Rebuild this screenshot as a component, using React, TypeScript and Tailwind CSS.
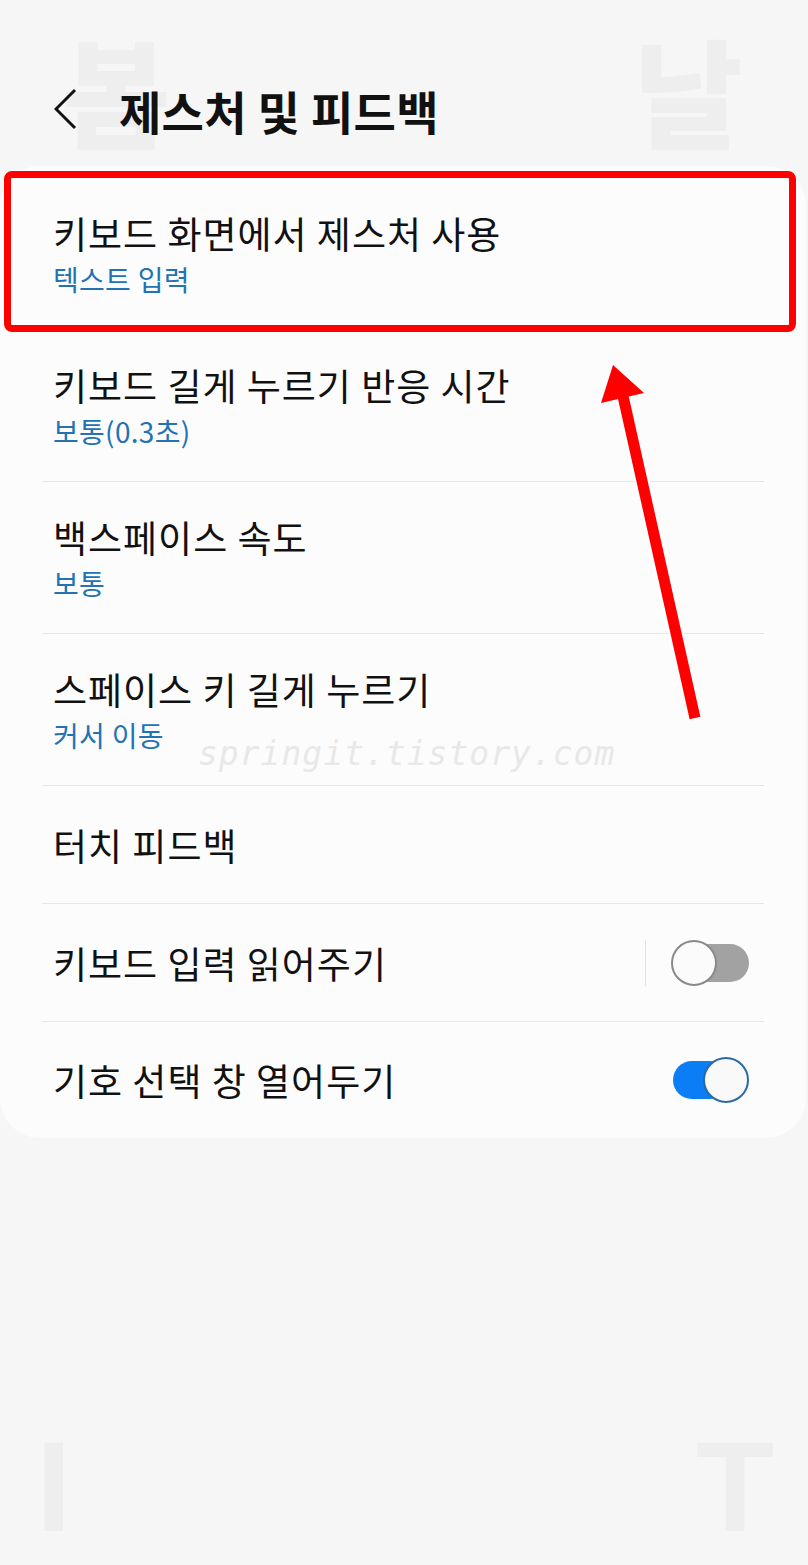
import React from "react";

const KR = { fontFamily: '"Noto Sans CJK KR", "Noto Sans", sans-serif' };

type Row = {
  title: string;
  sub?: string;
  toggle?: "on" | "off";
  divider: boolean;
};

const rows: Row[] = [
  { title: "키보드 화면에서 제스처 사용", sub: "텍스트 입력", divider: true },
  { title: "키보드 길게 누르기 반응 시간", sub: "보통(0.3초)", divider: true },
  { title: "백스페이스 속도", sub: "보통", divider: true },
  { title: "스페이스 키 길게 누르기", sub: "커서 이동", divider: true },
  { title: "터치 피드백", divider: true },
  { title: "키보드 입력 읽어주기", toggle: "off", divider: true },
  { title: "기호 선택 창 열어두기", toggle: "on", divider: false },
];

function Toggle({ on }: { on: boolean }) {
  if (on) {
    return (
      <div className="flex items-center w-[78px] h-[46px] shrink-0">
        <div className="w-[56px] h-[38px] ml-[2px] rounded-full bg-[#0b7df5]" />
        <div className="-ml-[26px] w-[46px] h-[46px] rounded-full bg-[#f9f9f9] border-[2.5px] border-[#2b6aa6]" />
      </div>
    );
  }
  return (
    <div className="flex items-center w-[78px] h-[46px] shrink-0">
      <div className="w-[46px] h-[46px] rounded-full bg-[#fbfbfb] border-[2.5px] border-[#8a8a8a] z-10" />
      <div className="-ml-[42px] w-[74px] h-[38px] rounded-full bg-[#a2a2a2]" />
    </div>
  );
}

export default function App() {
  return (
    <div
      className="relative w-[808px] h-[1565px] overflow-hidden bg-[#f6f6f6]"
      style={KR}
    >
      {/* faint background letters */}
      <div className="absolute left-[62px] top-[30px] text-[118px] leading-none font-black text-[#eeeeee] select-none">
        봄
      </div>
      <div className="absolute left-[634px] top-[30px] text-[118px] leading-none font-black text-[#eeeeee] select-none">
        날
      </div>
      <div
        className="absolute left-[36px] top-[1423px] text-[128px] leading-none font-bold text-[#eeeeee] select-none"
        style={{ fontFamily: '"Liberation Sans", Arial, sans-serif' }}
      >
        I
      </div>
      <div
        className="absolute left-[696px] top-[1423px] text-[128px] leading-none font-bold text-[#eeeeee] select-none"
        style={{ fontFamily: '"Liberation Sans", Arial, sans-serif' }}
      >
        T
      </div>

      {/* header */}
      <div className="relative h-[166px] flex items-start pt-[84px] pl-[54px]">
        <svg width="24" height="42" viewBox="0 0 24 42" className="mt-[4px]">
          <polyline
            points="21,2 2,21 21,40"
            fill="none"
            stroke="#111"
            strokeWidth="3"
            strokeLinejoin="miter"
          />
        </svg>
        <h1 className="ml-[41px] text-[46px] leading-[52px] font-bold text-[#111] tracking-[0.3px]">
          제스처 및 피드백
        </h1>
      </div>

      {/* card */}
      <div className="relative mr-[2px] rounded-[40px] bg-[#fcfcfc] pt-[12px]">
        {rows.map((r, i) => (
          <div key={i} className="px-[42px]">
            <div
              className={
                "flex items-center pl-[11px] pr-[15px] " +
                (r.sub ? "h-[152px] " : i === rows.length - 1 ? "h-[116px] " : "h-[118px] ") +
                (r.divider ? "border-b border-[#e6e6e6]" : "")
              }
            >
              <div className="flex-1 flex flex-col">
                <div className="text-[37px] leading-[44px] text-[#111] tracking-[1px]">
                  {r.title}
                </div>
                {r.sub && (
                  <div className="mt-[6px] text-[28px] leading-[36px] text-[#2372b3] tracking-[0.3px]">
                    {r.sub}
                  </div>
                )}
              </div>
              {r.toggle === "off" && (
                <div className="flex items-center">
                  <div className="w-[1px] h-[46px] bg-[#e2e2e2] mr-[25px]" />
                  <Toggle on={false} />
                </div>
              )}
              {r.toggle === "on" && <Toggle on={true} />}
            </div>
          </div>
        ))}
      </div>

      {/* site watermark */}
      <div
        className="absolute left-[198px] top-[730px] text-[33px] leading-[48px] italic text-[#e8e8e8] tracking-[1px] select-none"
        style={{ fontFamily: '"DejaVu Sans Mono", monospace', fontWeight: 300 }}
      >
        springit.tistory.com
      </div>

      {/* red highlight box */}
      <div className="absolute left-[4px] top-[171px] w-[792px] h-[161px] rounded-[8px] border-[7px] border-[#ff0000] shadow-[0_0_0_1px_rgba(255,255,255,0.8)]" />

      {/* red arrow */}
      <svg
        className="absolute left-0 top-0 pointer-events-none"
        width="808"
        height="1565"
        viewBox="0 0 808 1565"
      >
        <line x1="695" y1="718" x2="623" y2="396" stroke="#ffffff" strokeWidth="15" />
        <polygon points="613,365 601,403 644,393" fill="#ffffff" stroke="#ffffff" strokeWidth="3" strokeLinejoin="round" />
        <line x1="695" y1="718" x2="623" y2="396" stroke="#ff0000" strokeWidth="11" />
        <polygon points="613,365 601,403 644,393" fill="#ff0000" />
      </svg>
    </div>
  );
}
